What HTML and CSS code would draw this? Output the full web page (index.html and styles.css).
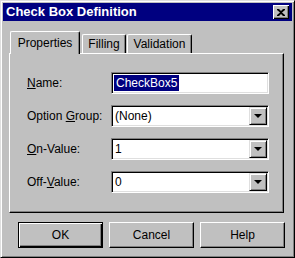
FILE: index.html
```html
<!DOCTYPE html>
<html lang="en">
<head>
    <meta charset="UTF-8">
    <title>Check Box Definition</title>
    <link rel="stylesheet" href="styles.css">
</head>
<body>
    <div class="window">
        <!-- Title bar -->
        <div class="titlebar">
            <span class="title">Check Box Definition</span>
            <button class="close">
                <svg width="8" height="7" viewBox="0 0 8 7"><path d="M0 0h2l2 2 2-2h2v1L5 3.5 8 6v1H6L4 5 2 7H0V6l3-2.5L0 1z" fill="#000"/></svg>
            </button>
        </div>

        <!-- Tabs -->
        <div class="tabs">
            <div class="tab active tab-props">Properties</div>
            <div class="tab tab-fill">Filling</div>
            <div class="tab tab-valid">Validation</div>
        </div>
        <div class="panel">
            <div class="form">
                <label class="label"><u>N</u>ame:</label>
                <div class="field"><span class="selected">CheckBox5</span></div>

                <label class="label">Option <u>G</u>roup:</label>
                <div class="field combo"><span class="value">(None)</span><span class="arrow"></span></div>

                <label class="label"><u>O</u>n-Value:</label>
                <div class="field combo"><span class="value">1</span><span class="arrow"></span></div>

                <label class="label">Off-<u>V</u>alue:</label>
                <div class="field combo"><span class="value">0</span><span class="arrow"></span></div>
            </div>
        </div>

        <!-- Buttons -->
        <div class="buttons">
            <button class="button default">OK</button>
            <button class="button">Cancel</button>
            <button class="button">Help</button>
        </div>
    </div>
</body>
</html>
```

FILE: styles.css
```css
body {
    margin: 0;
    font-family: "Liberation Sans", Arial, sans-serif;
    font-size: 12px;
    color: #000;
}
.window {
    width: 295px;
    height: 258px;
    box-sizing: border-box;
    background-color: #c0c0c0;
    border-top: 1px solid #dfdfdf;
    border-left: 1px solid #dfdfdf;
    border-right: 1px solid #000;
    border-bottom: 1px solid #000;
    box-shadow: inset 1px 1px #fff, inset -1px -1px #808080;
    padding: 2px;
}
.titlebar {
    height: 18px;
    background-color: #000080;
    display: flex;
    align-items: center;
    justify-content: space-between;
}
.title {
    color: #fff;
    font-weight: bold;
    font-size: 13px;
    padding-left: 3px;
    line-height: 18px;
}
.close {
    width: 16px;
    height: 14px;
    margin-right: 3px;
    padding: 0;
    border: none;
    background-color: #c0c0c0;
    box-shadow: inset 1px 1px #fff, inset -1px -1px #000, inset -2px -2px #808080;
    display: flex;
    align-items: center;
    justify-content: center;
}
.tabs {
    display: flex;
    align-items: flex-end;
    margin-top: 10px;
    padding-left: 7px;
    height: 22px;
    position: relative;
    z-index: 1;
}
.tab {
    height: 19px;
    box-sizing: border-box;
    border-top: 1px solid #fff;
    border-left: 1px solid #fff;
    border-right: 1px solid #000;
    border-radius: 2px 2px 0 0;
    box-shadow: inset -1px 0 #808080;
    display: flex;
    align-items: center;
    justify-content: center;
    margin-right: 1px;
}
.tab.active {
    height: 23px;
    margin-bottom: -1px;
    background-color: #c0c0c0;
}
.tab-props { width: 70px; padding-bottom: 1px; }
.tab-fill { width: 44px; margin-left: 1px; }
.tab-valid { width: 65px; }
.panel {
    margin-left: 6px;
    width: 275px;
    height: 160px;
    box-sizing: border-box;
    border-top: 1px solid #fff;
    border-left: 1px solid #fff;
    border-right: 1px solid #000;
    border-bottom: 1px solid #000;
    box-shadow: inset -1px -1px #808080;
    padding: 18px 0 0 17px;
}
.form {
    display: grid;
    grid-template-columns: 84px 158px;
    grid-auto-rows: 22px;
    row-gap: 11px;
    align-items: center;
}
.label u {
    text-decoration: underline;
}
.field {
    height: 22px;
    box-sizing: border-box;
    background-color: #fff;
    border-top: 1px solid #808080;
    border-left: 1px solid #808080;
    border-right: 1px solid #fff;
    border-bottom: 1px solid #fff;
    box-shadow: inset 1px 1px #000, inset -1px -1px #dfdfdf;
    padding: 2px 2px 2px 2px;
    display: flex;
    align-items: center;
}
.selected {
    background-color: #000080;
    color: #fff;
    padding: 1px 2px;
    line-height: 14px;
}
.value {
    flex: 1;
    padding-left: 1px;
}
.arrow {
    width: 18px;
    height: 18px;
    box-sizing: border-box;
    background-color: #c0c0c0;
    border-top: 1px solid #dfdfdf;
    border-left: 1px solid #dfdfdf;
    border-right: 1px solid #000;
    border-bottom: 1px solid #000;
    box-shadow: inset 1px 1px #fff, inset -1px -1px #808080;
    margin-right: -1px;
    display: flex;
    align-items: center;
    justify-content: center;
}
.arrow::after {
    content: "";
    border-left: 4px solid transparent;
    border-right: 4px solid transparent;
    border-top: 4px solid #000;
}
.buttons {
    display: flex;
    gap: 6px;
    margin: 9px 0 0 15px;
}
.button {
    width: 85px;
    height: 26px;
    font-family: inherit;
    font-size: 12px;
    color: #000;
    background-color: #c0c0c0;
    border-top: 1px solid #fff;
    border-left: 1px solid #fff;
    border-right: 1px solid #000;
    border-bottom: 1px solid #000;
    box-shadow: inset -1px -1px #808080;
    padding: 0;
}
.button.default {
    border: 1px solid #000;
    box-shadow: inset 1px 1px #fff, inset -1px -1px #000, inset -2px -2px #808080;
}
```
